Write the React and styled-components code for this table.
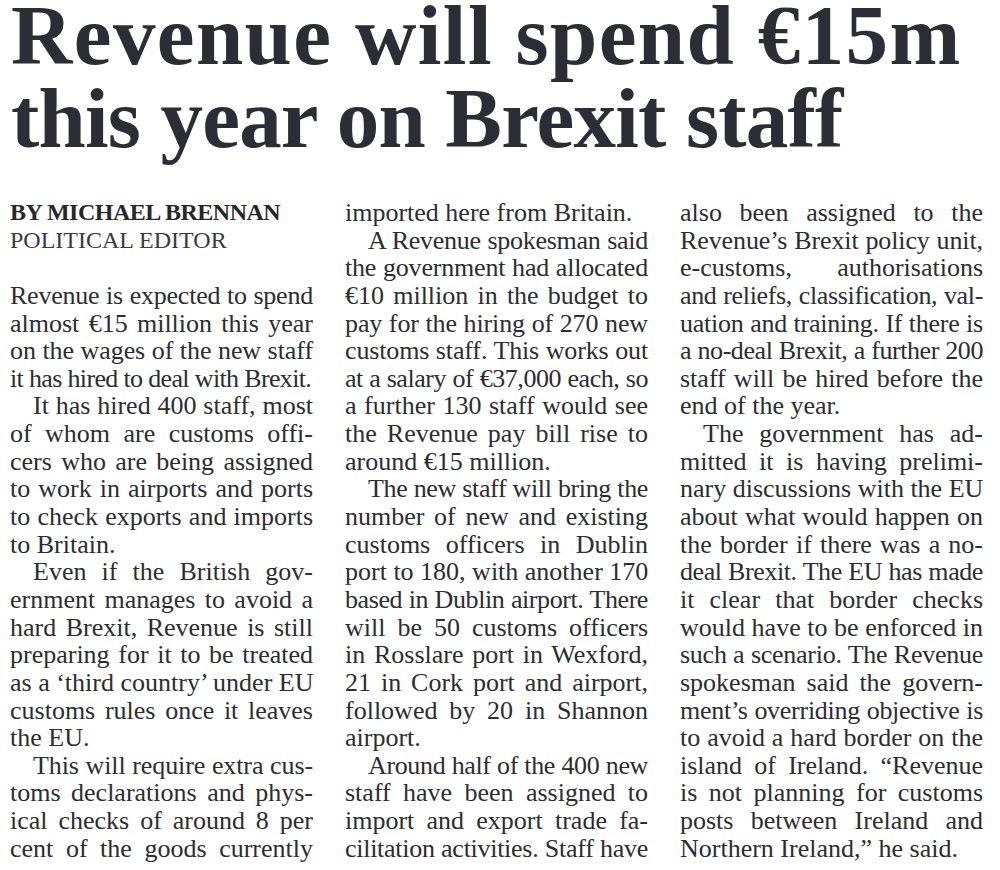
import React, { useLayoutEffect, useRef, useState } from 'react';
import styled, { createGlobalStyle } from 'styled-components';

const GlobalStyle = createGlobalStyle`
  html, body {
    margin: 0;
    padding: 0;
    background: #ffffff;
  }
  body {
    font-family: "Liberation Serif", "Times New Roman", serif;
    color: #2b2c31;
  }
`;

// last = final line of a paragraph (left aligned), indent = paragraph start
const columns = [
  [
    { kind: 'byline', text: 'BY MICHAEL BRENNAN' },
    { kind: 'role', text: 'POLITICAL EDITOR' },
    { kind: 'blank', text: '' },
    { text: 'Revenue is expected to spend' },
    { text: 'almost €15 million this year' },
    { text: 'on the wages of the new staff' },
    { text: 'it has hired to deal with Brexit.', last: true },
    { text: 'It has hired 400 staff, most', indent: true },
    { text: 'of whom are customs offi-' },
    { text: 'cers who are being assigned' },
    { text: 'to work in airports and ports' },
    { text: 'to check exports and imports' },
    { text: 'to Britain.', last: true },
    { text: 'Even if the British gov-', indent: true },
    { text: 'ernment manages to avoid a' },
    { text: 'hard Brexit, Revenue is still' },
    { text: 'preparing for it to be treated' },
    { text: 'as a ‘third country’ under EU' },
    { text: 'customs rules once it leaves' },
    { text: 'the EU.', last: true },
    { text: 'This will require extra cus-', indent: true },
    { text: 'toms declarations and phys-' },
    { text: 'ical checks of around 8 per' },
    { text: 'cent of the goods currently' },
  ],
  [
    { text: 'imported here from Britain.', last: true },
    { text: 'A Revenue spokesman said', indent: true },
    { text: 'the government had allocated' },
    { text: '€10 million in the budget to' },
    { text: 'pay for the hiring of 270 new' },
    { text: 'customs staff. This works out' },
    { text: 'at a salary of €37,000 each, so' },
    { text: 'a further 130 staff would see' },
    { text: 'the Revenue pay bill rise to' },
    { text: 'around €15 million.', last: true },
    { text: 'The new staff will bring the', indent: true },
    { text: 'number of new and existing' },
    { text: 'customs officers in Dublin' },
    { text: 'port to 180, with another 170' },
    { text: 'based in Dublin airport. There' },
    { text: 'will be 50 customs officers' },
    { text: 'in Rosslare port in Wexford,' },
    { text: '21 in Cork port and airport,' },
    { text: 'followed by 20 in Shannon' },
    { text: 'airport.', last: true },
    { text: 'Around half of the 400 new', indent: true },
    { text: 'staff have been assigned to' },
    { text: 'import and export trade fa-' },
    { text: 'cilitation activities. Staff have' },
  ],
  [
    { text: 'also been assigned to the' },
    { text: 'Revenue’s Brexit policy unit,' },
    { text: 'e-customs, authorisations' },
    { text: 'and reliefs, classification, val-' },
    { text: 'uation and training. If there is' },
    { text: 'a no-deal Brexit, a further 200' },
    { text: 'staff will be hired before the' },
    { text: 'end of the year.', last: true },
    { text: 'The government has ad-', indent: true },
    { text: 'mitted it is having prelimi-' },
    { text: 'nary discussions with the EU' },
    { text: 'about what would happen on' },
    { text: 'the border if there was a no-' },
    { text: 'deal Brexit. The EU has made' },
    { text: 'it clear that border checks' },
    { text: 'would have to be enforced in' },
    { text: 'such a scenario. The Revenue' },
    { text: 'spokesman said the govern-' },
    { text: 'ment’s overriding objective is' },
    { text: 'to avoid a hard border on the' },
    { text: 'island of Ireland. “Revenue' },
    { text: 'is not planning for customs' },
    { text: 'posts between Ireland and' },
    { text: 'Northern Ireland,” he said.', last: true },
  ],
];

const Page = styled.article`
  width: 1000px;
  height: 870px;
  overflow: hidden;
  box-sizing: border-box;
  padding: 0 0 0 10px;
`;

const Headline = styled.h1`
  margin: 0 0 0 1px;
  font-family: "Liberation Serif", "Times New Roman", serif;
  font-weight: 700;
  font-size: 85px;
  color: #2d2e35;
`;

const HeadLine = styled.span`
  display: block;
  white-space: nowrap;
  line-height: ${(p) => p.$lh}px;
  letter-spacing: ${(p) => p.$track}px;
`;

const Columns = styled.div`
  display: grid;
  grid-template-columns: repeat(3, 303px);
  column-gap: 32px;
  margin-top: 33px;
`;

const Column = styled.div`
  display: flex;
  flex-direction: column;
`;

const Line = styled.div`
  height: 27.65px;
  line-height: 27.65px;
  font-size: 26px;
  white-space: nowrap;
  text-align: justify;
  text-align-last: ${(p) => (p.$last ? 'left' : 'justify')};
  padding-left: ${(p) => (p.$indent ? '23px' : '0')};
  color: #2c2d31;
`;

const Byline = styled(Line)`
  font-size: 24px;
  font-weight: 700;
  letter-spacing: -0.5px;
  text-align-last: left;
  color: #26272b;
`;

const Role = styled(Line)`
  font-size: 24px;
  text-align-last: left;
  color: #3a3b3f;
`;

function FitLine({ as: Comp = Line, text, ...rest }) {
  const ref = useRef(null);
  const [spacing, setSpacing] = useState(0);

  useLayoutEffect(() => {
    const el = ref.current;
    if (!el) return;
    const over = el.scrollWidth - el.clientWidth;
    if (over > 0 && text.length > 1) {
      setSpacing(-(over + 1) / (text.length - 1));
    }
  }, [text]);

  return (
    <Comp ref={ref} style={spacing ? { letterSpacing: `${spacing}px` } : undefined} {...rest}>
      {text || '\u00a0'}
    </Comp>
  );
}

const App = () => {
  return (
    <>
      <GlobalStyle />
      <Page>
        <Headline>
          <HeadLine $lh={71} $track={1.4}>Revenue will spend €15m</HeadLine>
          <HeadLine $lh={95} $track={-0.8}>this year on Brexit staff</HeadLine>
        </Headline>
        <Columns>
          {columns.map((col, ci) => (
            <Column key={ci}>
              {col.map((ln, li) => {
                if (ln.kind === 'byline') return <FitLine key={li} as={Byline} text={ln.text} />;
                if (ln.kind === 'role') return <FitLine key={li} as={Role} text={ln.text} />;
                return (
                  <FitLine
                    key={li}
                    text={ln.text}
                    $last={ln.last}
                    $indent={ln.indent}
                  />
                );
              })}
            </Column>
          ))}
        </Columns>
      </Page>
    </>
  );
};

export default App;
